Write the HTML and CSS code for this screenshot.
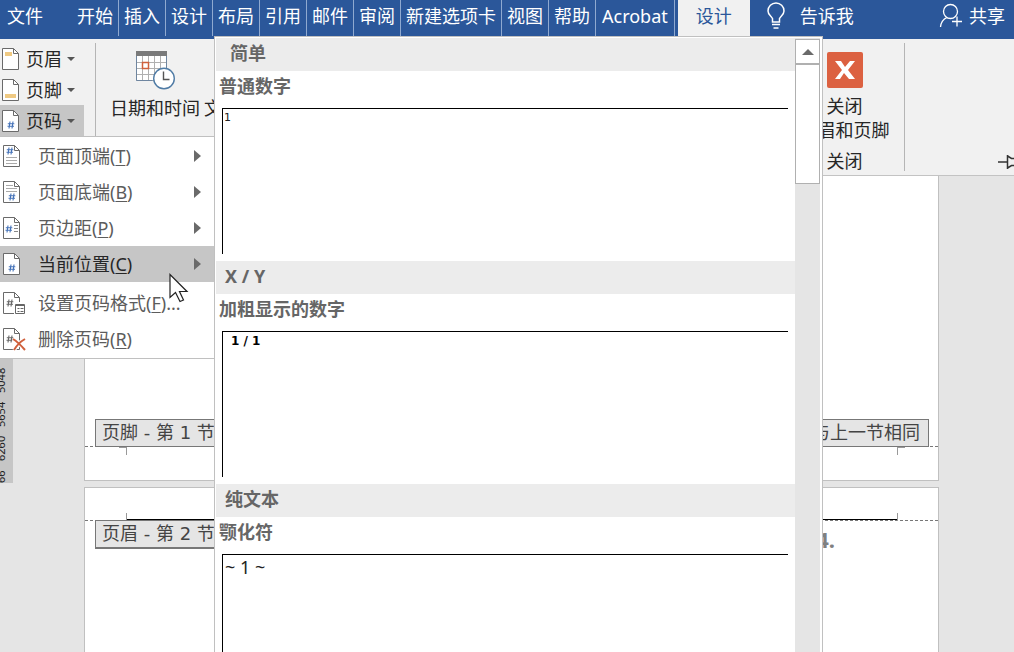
FILE: index.html
```html
<!DOCTYPE html>
<html lang="zh-CN">
<head>
<meta charset="utf-8">
<title>页眉和页脚工具</title>
<link rel="stylesheet" href="styles.css">
</head>
<body>
<svg class="defs" aria-hidden="true">
  <symbol id="sheet" viewBox="0 0 24 24">
    <path d="M3.500 1.500h11l5 5v16h-16z" fill="#fff" stroke="#6a6a6a"/>
    <path d="M14.500 1.500v5h5" fill="none" stroke="#6a6a6a"/>
  </symbol>
  <symbol id="hash" viewBox="0 0 8 8">
    <path d="M3 .5l-1 7M6 .5l-1 7M.8 2.700h6.500M.5 5.300h6.500" fill="none" stroke="currentColor" stroke-width="1.100"/>
  </symbol>
</svg>
<div class="app">
  <nav class="tabs">
    <button class="tab file">文件</button>
    <button class="tab">开始</button>
    <button class="tab">插入</button>
    <button class="tab">设计</button>
    <button class="tab">布局</button>
    <button class="tab">引用</button>
    <button class="tab">邮件</button>
    <button class="tab">审阅</button>
    <button class="tab">新建选项卡</button>
    <button class="tab">视图</button>
    <button class="tab">帮助</button>
    <button class="tab wide">Acrobat</button>
    <button class="tab active">设计</button>
    <button class="tool tell">
      <svg width="20" height="28" viewBox="0 0 20 28" fill="none" stroke="#fff" stroke-width="1.500"><path d="M6.500 20v-3.500C5 13.500 2 12.500 2 9a8 8 0 0 1 16 0C18 12.500 15 13.500 13.500 16.500V20zM6 22.500h8M7.500 26h5"/></svg>
      告诉我
    </button>
    <button class="tool share">
      <svg width="24" height="26" viewBox="0 0 24 26" fill="none" stroke="#fff" stroke-width="1.300"><circle cx="11.500" cy="8.500" r="7"/><path d="M1.500 24c.5-5 3-8 6.500-9.500M13 18.500h10M18 13.500v10"/></svg>
      共享
    </button>
  </nav>

  <section class="ribbon">
    <div class="stack">
      <button class="drop">
        <svg width="24" height="24"><use href="#sheet"/><path d="M6 5h7v4H6z" fill="#efc982"/></svg>
        页眉<i class="caret"></i>
      </button>
      <button class="drop">
        <svg width="24" height="24"><use href="#sheet"/><path d="M6 16h11v4H6z" fill="#efc982"/></svg>
        页脚<i class="caret"></i>
      </button>
      <button class="drop pressed">
        <svg width="24" height="24" color="#4472b8"><use href="#sheet"/><use href="#hash" x="8" y="12" width="8" height="8"/></svg>
        页码<i class="caret"></i>
      </button>
    </div>
    <div class="insert">
      <button class="big">
        <svg width="40" height="40" viewBox="0 0 40 40">
          <path d="M1.500 5h30v25h-30z" fill="#fff"/>
          <path d="M1.500 5v25.500h30V5M7.500 6v24M13.500 6v24M19.500 6v24M25.500 6v24M2 12.500h29M2 18.500h29M2 24.500h29" fill="none" stroke="#b0b0b0"/>
          <path d="M1.500 5v25.500h16M31.500 5v14" fill="none" stroke="#6f86a0"/>
          <path d="M1 1h31v5H1z" fill="#7a7a7a"/>
          <rect x="7.500" y="12.500" width="6" height="6" fill="#fff" stroke="#d0603c" stroke-width="1.500"/>
          <circle cx="29" cy="28.500" r="10.300" fill="#fff" stroke="#4f7ba5" stroke-width="1.400"/>
          <path d="M28.500 21.500v8h6" fill="none" stroke="#555" stroke-width="1.400"/>
        </svg>
        日期和时间
      </button>
      <button class="big plain">文</button>
    </div>
    <div class="closing">
      <button class="big close">
        <svg width="36" height="36" viewBox="0 0 36 36"><rect width="36" height="36" rx="2" fill="#dc6141"/><path d="M8 9h6l4 6 5-6h5l-7 9 7 9h-6l-5-6-4 6H8l7-9z" fill="#fff"/></svg>
        <span>关闭<br>页眉和页脚</span>
      </button>
      <span class="caption">关闭</span>
    </div>
    <button class="pin" aria-label="固定功能区">
      <svg width="16" height="18" viewBox="0 0 16 18" fill="none" stroke="#333" stroke-width="1.500"><path d="M0 9h9M9.500 2v14M9.500 3l4 2.500H18M9.500 15l4-2.500H18"/></svg>
    </button>
  </section>

  <main class="document">
    <div class="ruler"><div class="marks"><span>66</span><span>6260</span><span>5654</span><span>5048</span></div></div>
    <div class="pages">
      <article class="sheet first">
        <div class="edge foot"><span class="tag">页脚 - 第 1 节</span><span class="tag">与上一节相同</span></div>
        <div class="corners low"><i></i><i></i></div>
      </article>
      <article class="sheet second">
        <div class="corners high"><i></i><i></i></div>
        <div class="edge head"><span class="tag">页眉 - 第 2 节</span><span class="number">4.</span></div>
      </article>
    </div>
  </main>

  <div class="menu">
    <button class="item"><svg width="26" height="24" color="#4472b8"><use href="#sheet" width="24" height="24"/><use href="#hash" x="6" y="3" width="8" height="8"/><path d="M6 13.500h11M6 16.500h11M6 19.500h11" stroke="#aaa"/></svg><span>页面顶端(<u>T</u>)</span><i class="arrow"></i></button>
    <button class="item"><svg width="26" height="24" color="#4472b8"><use href="#sheet" width="24" height="24"/><use href="#hash" x="8" y="13" width="8" height="8"/><path d="M6 5.500h7M6 8.500h11M6 11.500h11" stroke="#aaa"/></svg><span>页面底端(<u>B</u>)</span><i class="arrow"></i></button>
    <button class="item"><svg width="26" height="24" color="#4472b8"><use href="#sheet" width="24" height="24"/><use href="#hash" x="5" y="9" width="8" height="8"/><path d="M14 9.500h4M14 12.500h4M14 15.500h4" stroke="#888"/></svg><span>页边距(<u>P</u>)</span><i class="arrow"></i></button>
    <button class="item current"><svg width="26" height="24" color="#4472b8"><use href="#sheet" width="24" height="24"/><use href="#hash" x="8" y="12" width="8" height="8"/></svg><span>当前位置(<u>C</u>)</span><i class="arrow"></i></button>
    <hr>
    <button class="item"><svg width="26" height="24" color="#666"><use href="#sheet" width="24" height="24"/><use href="#hash" x="6" y="8" width="8" height="8"/><path d="M14 11h12v13H14z" fill="#fff"/><path d="M15.500 13.500h9v9h-9zM15.500 14.500h9M17.500 17.500h2M20.500 17.500h3M17.500 20.500h2M20.500 20.500h3" fill="none" stroke="#666"/></svg><span>设置页码格式(<u>F</u>)...</span></button>
    <button class="item"><svg width="26" height="24" color="#666"><use href="#sheet" width="24" height="24"/><use href="#hash" x="6" y="8" width="8" height="8"/><path d="M13 12q5 3 12 11M25 12q-7 4-11 11" fill="none" stroke="#fff" stroke-width="4"/><path d="M13 12q5 3 12 11M25 12q-7 4-11 11" fill="none" stroke="#d0603c" stroke-width="2"/></svg><span>删除页码(<u>R</u>)</span></button>
  </div>

  <div class="gallery">
    <div class="list">
      <section>
        <h2 class="indent">简单</h2>
        <h3>普通数字</h3>
        <div class="preview small">1</div>
      </section>
      <section>
        <h2>X / Y</h2>
        <h3>加粗显示的数字</h3>
        <div class="preview strong">1 / 1</div>
      </section>
      <section>
        <h2>纯文本</h2>
        <h3>颚化符</h3>
        <div class="preview">~ 1 ~</div>
      </section>
    </div>
    <div class="scroll">
      <button class="up" aria-label="向上滚动"><i></i></button>
      <div class="thumb"></div>
    </div>
  </div>

  <svg class="cursor" width="20" height="30" viewBox="0 0 20 30"><path d="M1 1.500v23l5.500-5 4.500 9 3.500-1.500-4-8.500h7.500z" fill="#fff" stroke="#222" stroke-width="1.200"/></svg>
</div>
</body>
</html>
```
FILE: styles.css
```css
* { box-sizing: border-box; }

body {
  margin: 0;
  font: 18px/24px "Noto Sans", "Noto Sans CJK SC", sans-serif;
  color: #262626;
}

button {
  margin: 0;
  padding: 0;
  border: 0;
  background: none;
  font: inherit;
  color: inherit;
  white-space: nowrap;
}

.defs { position: absolute; width: 0; height: 0; }

.app {
  position: relative;
  display: flex;
  flex-direction: column;
  height: 100vh;
  overflow: hidden;
}

/* Tab strip */
.tabs {
  display: flex;
  flex: none;
  height: 39px;
  padding-bottom: 3px;
  background: #2b579a;
  color: #fff;
}
.tab {
  padding: 0 5px 5px;
  border-right: 1px solid #8fa9d0;
}
.tab.file { padding-right: 29px; padding-left: 7px; border: 0; }
.tab.wide { padding: 0 6px 5px; }
.tab.active {
  margin-left: 3px;
  padding: 0 18px 5px;
  border: 0;
  background: #f1f1f1;
  color: #2b579a;
}
.tool { display: flex; align-items: center; padding-bottom: 5px; }
.tell { gap: 14px; margin-left: 16px; }
.share { gap: 6px; margin-left: auto; padding-right: 9px; }

/* Ribbon */
.ribbon {
  display: flex;
  flex: none;
  height: 137px;
  padding: 4px 0;
  border-bottom: 1px solid #c3c3c3;
  background: #f1f1f1;
}
.stack { width: 96px; border-right: 1px solid #b5b5b5; }
.drop {
  display: flex;
  align-items: center;
  width: 84px;
  height: 31px;
}
.drop svg { margin: 0 3px 0 -1px; }
.pressed { background: #c6c6c6; }
.caret {
  margin-left: 5px;
  border: 4px solid transparent;
  border-top-color: #555;
  border-bottom: 0;
}
.insert { display: flex; flex: 1; gap: 4px; padding: 7px 0 0 14px; }
.big {
  display: flex;
  flex-direction: column;
  align-items: center;
  align-self: flex-start;
  gap: 6px;
}
.plain { padding-top: 46px; }
.closing {
  display: flex;
  flex-direction: column;
  align-items: center;
  width: 120px;
  padding-top: 9px;
  border-right: 1px solid #b5b5b5;
}
.close { align-self: center; }
.caption { margin-top: 7px; }
.pin { display: flex; align-self: flex-end; width: 109px; padding: 0 0 0 93px; }

/* Document */
.document {
  display: flex;
  flex: 1;
  min-height: 0;
  background: #e5e5e5;
}
.ruler {
  flex: none;
  align-self: flex-start;
  width: 13px;
  height: 307px;
  overflow: hidden;
  background: #c6c6c6;
}
.marks {
  display: flex;
  gap: 9px;
  height: 307px;
  width: 12px;
  margin-left: -5px;
  font-size: 11px;
  line-height: 12px;
  color: #222;
  writing-mode: vertical-rl;
  transform: rotate(180deg);
}
.pages {
  display: flex;
  flex: 1;
  flex-direction: column;
  gap: 6px;
  margin: 0 75px 0 71px;
}
.sheet {
  display: flex;
  flex-direction: column;
  border: 1px solid #c0c0c0;
  background: #fff;
}
.first { height: 305px; border-top: 0; justify-content: flex-end; padding-bottom: 25px; }
.second { flex: 1; border-bottom: 0; padding-top: 25px; }
.edge {
  display: flex;
  align-items: flex-start;
  justify-content: space-between;
  padding: 0 9px 0 10px;
  color: #444;
}
.foot, .high { border-bottom: 1px dashed #777; }
.foot .tag { margin-bottom: -1px; }
.tag {
  padding: 1px 8px 1px 6px;
  border: 1px solid #777;
  background: #e5e5e5;
  font-family: "DejaVu Sans", "Noto Sans CJK SC", sans-serif;
}
.number { padding: 6px 94px 0 0; font-size: 22px; font-weight: bold; color: #808080; }
.corners { display: flex; justify-content: space-between; padding: 0 33px 0 34px; }
.corners i { width: 8px; height: 8px; border: 0 solid #999; }
.corners i:first-child { border-right-width: 1px; }
.corners i:last-child { order: 2; border-left-width: 1px; }
.low { height: 8px; }
.low i { border-top-width: 1px; }
.high { height: 8px; }
.high::before { content: ""; order: 1; flex: 1; height: 6px; border-bottom: 1px solid #000; }
.head .tag { margin-top: -1px; border-bottom-width: 2px; }

/* Page number menu */
.menu {
  position: absolute;
  top: 136px;
  left: 0;
  width: 214px;
  padding: 1px 0;
  border: solid #c0c0c0;
  border-width: 1px 0;
  background: #fff;
  color: #5c5c5c;
}
.item {
  display: flex;
  gap: 12px;
  align-items: center;
  width: 100%;
  height: 36px;
  padding-right: 13px;
}
.item svg { flex: none; }
.current { background: #c6c6c6; color: #262626; }
.item u { text-decoration-thickness: 1px; text-underline-offset: 2px; }
.arrow {
  margin-left: auto;
  border: 6px solid transparent;
  border-left: 7px solid #6a6a6a;
  border-right: 0;
}
.menu hr { height: 3px; margin: 0; border: 0; }

/* Number gallery */
.gallery {
  position: absolute;
  top: 36px;
  bottom: 0;
  left: 214px;
  display: flex;
  width: 609px;
  padding: 1px 2px 0 1px;
  overflow: hidden;
  border: solid #c0c0c0;
  border-width: 1px 1px 0;
  background: #fff;
  color: #666;
}
.list { flex: 1; }
.gallery h2, .gallery h3 { margin: 0; font-size: 18px; font-weight: bold; }
.gallery h2 { height: 33px; padding: 3px 9px; line-height: 24px; background: #ececec; }
.gallery h2.indent { padding-left: 14px; }
.gallery h3 { height: 37px; padding: 3px; line-height: 24px; }
.preview {
  height: 146px;
  margin: 0 7px 7px 6px;
  padding: 0 2px;
  border: solid #000;
  border-width: 1px 0 0 1px;
  color: #222;
}
.small { padding: 1px 1px; font: 11px/16px "DejaVu Sans", sans-serif; }
.strong { padding: 1px 8px; font: bold 12px/16px "DejaVu Sans", sans-serif; color: #000; }
.scroll { width: 25px; padding-top: 1px; background: #e5e5e5; }
.up {
  display: flex;
  align-items: center;
  justify-content: center;
  width: 25px;
  height: 25px;
  border: 1px solid #b0b0b0;
  background: #fff;
}
.up i { border: 6px solid transparent; border-top: 0; border-bottom-color: #6a6a6a; }
.thumb { height: 120px; border: 1px solid #b0b0b0; background: #fff; }

.cursor { position: absolute; top: 273px; left: 169px; }
```
